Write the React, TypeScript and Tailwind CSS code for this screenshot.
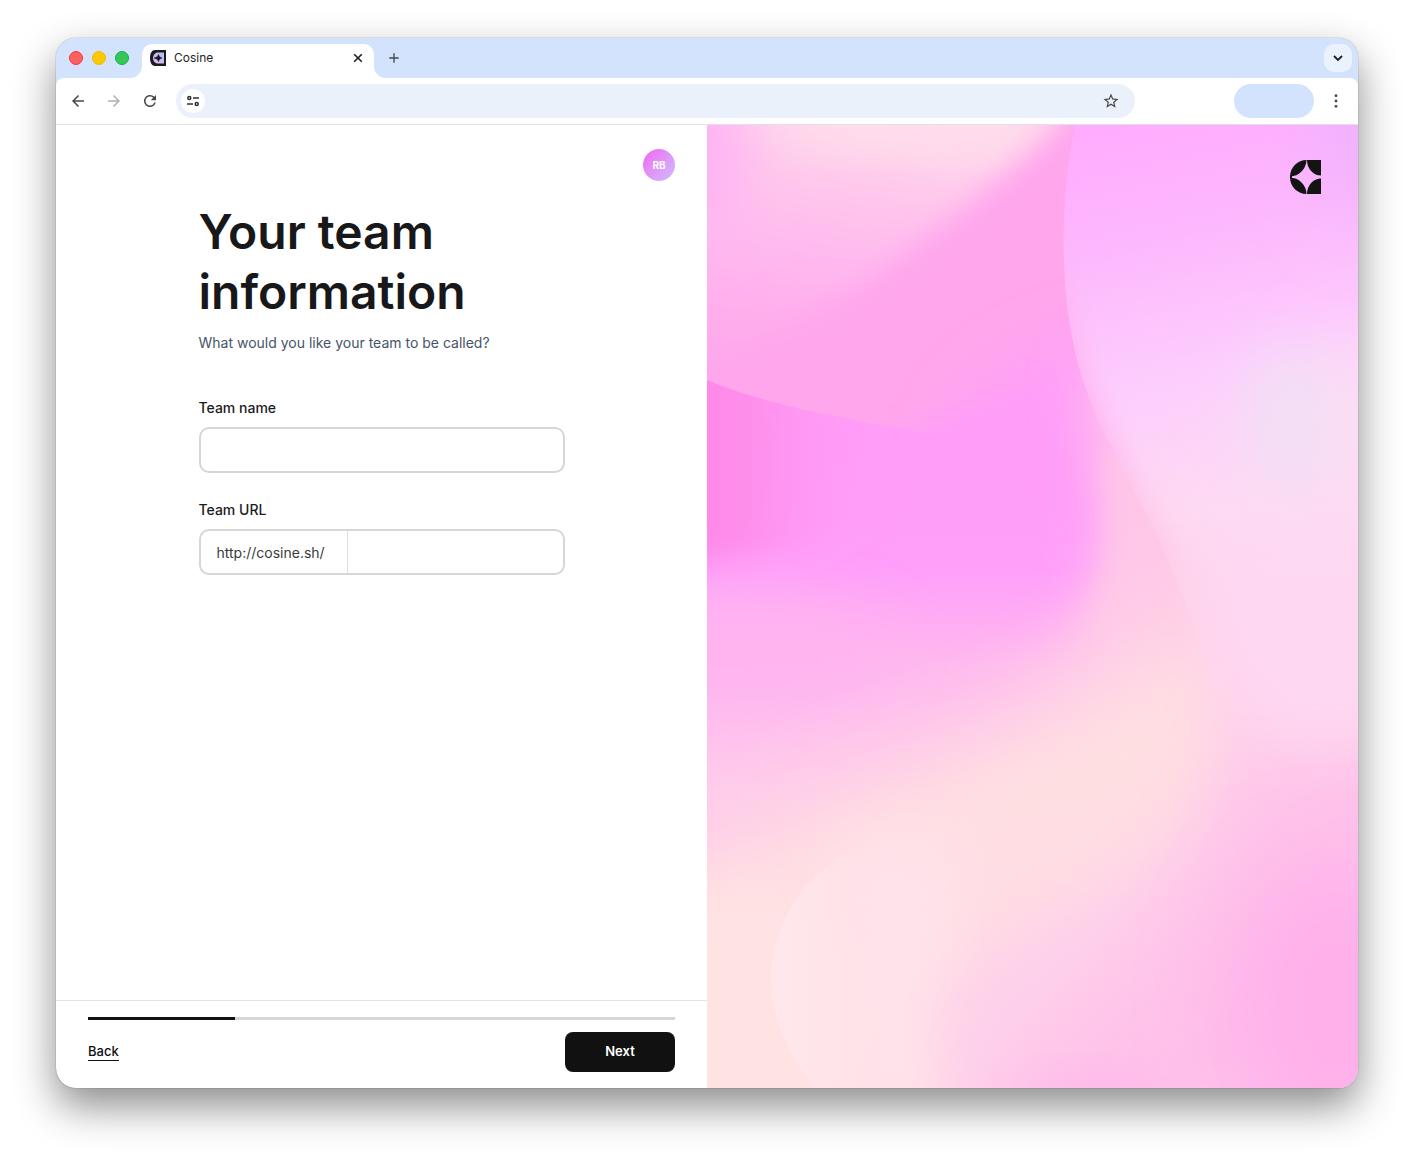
import type { ReactNode } from "react";
import { MdArrowBack, MdArrowForward, MdRefresh, MdStarBorder, MdAdd } from "react-icons/md";

function Favicon() {
  return (
    <svg viewBox="0 0 16 16" className="size-4 shrink-0" aria-hidden="true">
      <defs>
        <linearGradient id="fav" x1="0" y1="1" x2="1" y2="0">
          <stop offset="0" stopColor="#e6b4f4" />
          <stop offset="1" stopColor="#a8c8f5" />
        </linearGradient>
      </defs>
      <path d="M5 0H16V16H5C2 16 0 13 0 8S2 0 5 0Z" fill="#1b1b20" />
      <path d="M8 2.500H14V13.500H8C5 13.500 3 11 3 8S5 2.500 8 2.500Z" fill="url(#fav)" />
      <path d="M8.500 4.500Q9 7.500 12 8Q9 8.500 8.500 11.500Q8 8.500 4 8Q8 7.500 8.500 4.500Z" fill="#18181b" stroke="#18181b" strokeWidth="0.600" />
    </svg>
  );
}

function Logo() {
  return (
    <svg viewBox="0 0 31 34" className="h-[34px] w-[31px]" role="img" aria-label="Cosine" fill="#141414">
      <path d="M16.500 0A16.500 17 0 0 0 0 16.500A17 17 0 0 0 16.500 0Z" />
      <path d="M16.500 34A16.500 17 0 0 1 0 17.500A17 17 0 0 1 16.500 34Z" />
      <path d="M17 0H31V15.500A14 15.500 0 0 1 17 0Z" />
      <path d="M17 34H31V18.500A14 15.500 0 0 0 17 34Z" />
      <path d="M0 15.500H2V18.500H0Z" />
    </svg>
  );
}

function SiteSettingsIcon() {
  return (
    <svg viewBox="0 0 12 12" className="size-3" fill="none" stroke="#303134" strokeWidth="1.500" aria-hidden="true">
      <circle cx="2.300" cy="3" r="1.500" />
      <path d="M6 3H12M0 9H6" />
      <circle cx="9.700" cy="9" r="1.500" />
    </svg>
  );
}

function CloseIcon() {
  return (
    <svg viewBox="0 0 16 16" className="size-4" fill="none" stroke="currentColor" strokeWidth="1.600" aria-hidden="true">
      <path d="M4.200 4.200L11.800 11.800M11.800 4.200L4.200 11.800" />
    </svg>
  );
}

function ChevronIcon() {
  return (
    <svg viewBox="0 0 16 16" className="size-4" fill="none" stroke="currentColor" strokeWidth="1.800" aria-hidden="true">
      <path d="M4 6L8 10L12 6" />
    </svg>
  );
}

function MenuDots() {
  return (
    <svg viewBox="0 0 4 14" className="h-3.5 w-1" fill="currentColor" aria-hidden="true">
      <circle cx="2" cy="1.700" r="1.400" />
      <circle cx="2" cy="7" r="1.400" />
      <circle cx="2" cy="12.300" r="1.400" />
    </svg>
  );
}

function Artwork() {
  return (
    <svg viewBox="0 0 651 963" preserveAspectRatio="none" className="absolute inset-0 size-full" aria-hidden="true">
      <defs>
        <filter id="b12" x="-50%" y="-50%" width="200%" height="200%"><feGaussianBlur stdDeviation="14" /></filter>
        <filter id="b25" x="-50%" y="-50%" width="200%" height="200%"><feGaussianBlur stdDeviation="28" /></filter>
        <filter id="b45" x="-80%" y="-80%" width="260%" height="260%"><feGaussianBlur stdDeviation="45" /></filter>
        <linearGradient id="leftBase" x1="0" y1="0" x2="0" y2="963" gradientUnits="userSpaceOnUse">
          <stop offset="0" stopColor="#ffa8e8" />
          <stop offset="0.200" stopColor="#ffa5ee" />
          <stop offset="0.320" stopColor="#ff9df8" />
          <stop offset="0.460" stopColor="#ff9ffa" />
          <stop offset="0.560" stopColor="#ffb9ee" />
          <stop offset="0.700" stopColor="#ffcaec" />
          <stop offset="1" stopColor="#ffcaec" />
        </linearGradient>
        <linearGradient id="rightBase" x1="420" y1="0" x2="560" y2="640" gradientUnits="userSpaceOnUse">
          <stop offset="0" stopColor="#ffacfe" />
          <stop offset="0.180" stopColor="#fdb8fd" />
          <stop offset="0.400" stopColor="#fdcefd" />
          <stop offset="0.600" stopColor="#fedaf3" />
          <stop offset="1" stopColor="#fed6f2" />
        </linearGradient>
        <linearGradient id="topFold" x1="160" y1="0" x2="120" y2="250" gradientUnits="userSpaceOnUse">
          <stop offset="0" stopColor="#ffd9ec" />
          <stop offset="0.280" stopColor="#ffc6ec" />
          <stop offset="0.500" stopColor="#ffbbef" />
          <stop offset="0.800" stopColor="#ffaeec" />
          <stop offset="1" stopColor="#ffa8ec" />
        </linearGradient>
        <linearGradient id="pinkGlow" x1="0" y1="0" x2="170" y2="0" gradientUnits="userSpaceOnUse">
          <stop offset="0" stopColor="#ff88e8" />
          <stop offset="0.300" stopColor="#ff90ec" />
          <stop offset="1" stopColor="#ff9afc" stopOpacity="0" />
        </linearGradient>
        <linearGradient id="lobe" x1="75" y1="0" x2="200" y2="0" gradientUnits="userSpaceOnUse">
          <stop offset="0" stopColor="#ffe7ec" />
          <stop offset="1" stopColor="#ffe4ea" stopOpacity="0" />
        </linearGradient>
        <clipPath id="foldClip"><path d="M0 0H385V310H220C160 295 70 285 0 255Z" /></clipPath>
        <clipPath id="rightClip"><path d="M368 0C350 90 353 190 378 262C402 330 436 375 454 420C475 470 500 520 512 600L520 740H651V0Z" /></clipPath>
        <linearGradient id="edgeMask" x1="0" y1="380" x2="0" y2="620" gradientUnits="userSpaceOnUse">
          <stop offset="0" stopColor="#fff" />
          <stop offset="1" stopColor="#000" />
        </linearGradient>
        <mask id="rightMask"><rect width="651" height="963" fill="url(#edgeMask)" /></mask>
      </defs>
      <rect width="651" height="963" fill="url(#leftBase)" />
      <path d="M-80 200H200V380L100 420L-80 450Z" fill="url(#pinkGlow)" filter="url(#b12)" />
      <ellipse cx="20" cy="525" rx="160" ry="50" fill="#ffb4f0" filter="url(#b25)" />

      <g clipPath="url(#foldClip)">
        <rect width="420" height="320" fill="#ffa6ed" />
        <path d="M-80 -80H400L345 5C300 45 270 75 220 110C170 150 110 200 -80 270Z" fill="url(#topFold)" filter="url(#b12)" />
        <ellipse cx="200" cy="-15" rx="110" ry="30" fill="#ffe0ea" filter="url(#b25)" />
        <ellipse cx="-15" cy="20" rx="55" ry="90" fill="#ffb2f4" filter="url(#b25)" />
        <path d="M240 345C250 270 310 230 420 205V345Z" fill="#ff9ef9" filter="url(#b25)" />
        <path d="M150 365C170 310 240 275 420 270V365Z" fill="#ff9df9" filter="url(#b12)" />
      </g>

      <path d="M-80 700C60 650 210 615 300 565C370 530 400 480 405 400C404 350 385 300 380 250L700 200V1040H-80Z" fill="#ffcbe9" filter="url(#b25)" />
      <path d="M395 330C408 400 405 460 380 510L480 540V330Z" fill="#ffc6e8" filter="url(#b12)" />
      <path d="M-120 760C80 700 280 645 370 590C440 545 450 500 455 440L530 560V1080H-120Z" fill="#ffdde3" filter="url(#b45)" />
      <path d="M60 745C200 680 350 620 430 590C500 540 510 600 480 640C400 690 150 740 60 790Z" fill="#ffdfe1" filter="url(#b25)" />
      <ellipse cx="30" cy="890" rx="130" ry="130" fill="#ffe3e3" filter="url(#b25)" />
      <path d="M135 730C60 780 50 860 80 920Q95 950 115 970H220V730Z" fill="url(#lobe)" />
      <path d="M130 710H250V1000H150Z" fill="#ffe3ea" filter="url(#b25)" />

      <path d="M520 600C520 700 480 720 420 750C340 790 270 810 230 880L240 1040H740V540Z" fill="#fed1ea" filter="url(#b25)" />
      <path d="M560 640C510 700 500 760 430 830C400 870 350 910 300 960V1040H740V600Z" fill="#ffbcea" opacity="0.800" filter="url(#b45)" />
      <ellipse cx="630" cy="880" rx="100" ry="140" fill="#ffafea" filter="url(#b45)" />
      <ellipse cx="385" cy="985" rx="75" ry="28" fill="#ffb6ec" filter="url(#b25)" />
      <path d="M520 400L515 540C550 630 590 630 720 600V350Z" fill="#fed8f2" filter="url(#b25)" />

      <g clipPath="url(#rightClip)" mask="url(#rightMask)">
        <rect x="340" width="320" height="760" fill="url(#rightBase)" />
        <path d="M350 100C350 220 420 350 460 430L440 500L320 280Z" fill="#ffb2ee" filter="url(#b12)" />
        <path d="M390 330L480 440V640H430Z" fill="#ffd4e4" filter="url(#b25)" />
      </g>
      <ellipse cx="675" cy="0" rx="50" ry="80" fill="#e8b2ff" filter="url(#b45)" />
      <ellipse cx="590" cy="295" rx="55" ry="75" fill="#f3dff5" filter="url(#b25)" />
      <ellipse cx="655" cy="290" rx="25" ry="80" fill="#fcdff3" filter="url(#b25)" />
    </svg>
  );
}

function ToolButton({ label, children }: { label: string; children: ReactNode }) {
  return (
    <button type="button" aria-label={label} className="flex size-7 shrink-0 items-center justify-center rounded-full text-[#474747]">
      {children}
    </button>
  );
}

function TabStrip() {
  return (
    <div className="flex h-10 items-end bg-[#d3e3fd] pr-1.5">
      <div className="flex h-10 items-center gap-[9px] pl-[13px]">
        <span className="size-3.5 rounded-full border border-[#f9333d] bg-[#fe5f5f]" />
        <span className="size-3.5 rounded-full border border-[#f0b90a] bg-[#fcc800]" />
        <span className="size-3.5 rounded-full border border-[#0cb43a] bg-[#35c759]" />
      </div>
      <span className="ml-px size-3 overflow-hidden bg-white">
        <span className="block size-3 rounded-br-[12px] bg-[#d3e3fd]" />
      </span>
      <div className="flex h-[34px] w-[232px] items-center gap-2 rounded-t-[10px] bg-white pr-2 pb-1.5 pl-2">
        <Favicon />
        <span className="flex-1 font-[Inter,sans-serif] text-xs text-[#1f1f1f]">Cosine</span>
        <button type="button" aria-label="Close tab" className="text-[#1f1f1f]">
          <CloseIcon />
        </button>
      </div>
      <span className="size-3 overflow-hidden bg-white">
        <span className="block size-3 rounded-bl-[12px] bg-[#d3e3fd]" />
      </span>
      <button type="button" aria-label="New tab" className="flex h-10 items-center text-[#474747]">
        <MdAdd className="size-4" />
      </button>
      <button type="button" aria-label="Search tabs" className="mb-1.5 ml-auto flex size-7 items-center justify-center rounded-[10px] bg-[#eaf2fe] text-[#1f1f1f]">
        <ChevronIcon />
      </button>
    </div>
  );
}

function Toolbar() {
  return (
    <div className="bg-[#d3e3fd]">
      <div className="flex h-[47px] items-center rounded-t-[8px] border-b border-[#dfe1e5] bg-white pr-2 pl-2">
        <div className="flex gap-2">
          <ToolButton label="Go back"><MdArrowBack className="size-[18px]" /></ToolButton>
          <span className="flex text-[#b0b0b0]">
            <button type="button" disabled aria-label="Go forward" className="flex size-7 items-center justify-center">
              <MdArrowForward className="size-[18px]" />
            </button>
          </span>
          <ToolButton label="Reload"><MdRefresh className="size-[18px]" /></ToolButton>
        </div>
        <div className="ml-3 flex h-[34px] flex-1 items-center rounded-full bg-[#eaf1fa] pr-2.5 pl-[5px]">
          <button type="button" aria-label="Site information" className="flex size-6 items-center justify-center rounded-full bg-white">
            <SiteSettingsIcon />
          </button>
          <input aria-label="Address" className="min-w-0 flex-1 bg-transparent px-2 font-[Inter,sans-serif] text-sm outline-none" />
          <ToolButton label="Bookmark this page"><MdStarBorder className="size-[18px]" /></ToolButton>
        </div>
        <span className="ml-[99px] h-[34px] w-20 rounded-full bg-[#d3e3fd]" />
        <div className="ml-2 flex"><ToolButton label="Menu"><MenuDots /></ToolButton></div>
      </div>
    </div>
  );
}

function TeamForm() {
  return (
    <form id="team" className="mx-auto mt-[21px] w-full max-w-[366px]">
      <h1 className="text-5xl leading-[60px] font-semibold text-[#18181b]">Your team information</h1>
      <p className="mt-[11px] text-sm text-[#475467]">What would you like your team to be called?</p>
      <label htmlFor="team-name" className="mt-[45px] block text-sm font-medium text-[#1c1c1e]">Team name</label>
      <input id="team-name" className="mt-[9px] h-[46px] w-full rounded-[10px] border-2 border-[#d6d6d6] px-4 text-sm outline-none" />
      <label htmlFor="team-url" className="mt-[27px] block text-sm font-medium text-[#1c1c1e]">Team URL</label>
      <div className="mt-[9px] flex h-[46px] items-center overflow-hidden rounded-[10px] border-2 border-[#d6d6d6] text-sm text-[#3a3a3c]">
        <span className="flex h-full w-[147px] shrink-0 items-center border-r border-[#e0e0e0] pt-0.5 pl-4">http://cosine.sh/</span>
        <input id="team-url" className="h-full min-w-0 flex-1 px-4 outline-none" />
      </div>
    </form>
  );
}

export default function App() {
  return (
    <div className="flex min-h-screen flex-col bg-white px-14 pt-[38px] pb-[74px]">
      <div className="flex flex-1 flex-col overflow-hidden rounded-[20px] bg-white shadow-[0_0_1px_0_rgba(0,0,0,0.7),0_18px_42px_rgba(0,0,0,0.46)]">
        <TabStrip />
        <Toolbar />
        <div className="grid flex-1 grid-cols-2 font-[Inter,sans-serif]">
          <main className="flex flex-col">
            <div className="flex flex-1 flex-col px-8 pt-6">
              <button type="button" className="size-8 self-end rounded-full bg-linear-to-br from-[#f062f0] to-[#c9bdff] text-[10px] font-bold text-white">RB</button>
              <TeamForm />
            </div>
            <footer className="border-t border-[#e4e4e7] px-8 py-4">
              <div role="progressbar" aria-label="Setup progress" aria-valuenow={25} aria-valuemin={0} aria-valuemax={100} className="h-[3px] bg-[#d6d6d6]">
                <div className="h-full w-1/4 bg-[#111111]" />
              </div>
              <div className="mt-3 flex items-center justify-between">
                <a href="#back" className="border-b border-[#111111] pb-px text-[13px] leading-4 font-medium text-[#111111]">Back</a>
                <button type="submit" form="team" className="h-10 w-[110px] rounded-lg bg-[#111111] text-[13px] font-semibold text-white">Next</button>
              </div>
            </footer>
          </main>
          <aside className="relative flex items-start justify-end overflow-hidden">
            <Artwork />
            <div className="relative pt-[35px] pr-[37px]"><Logo /></div>
          </aside>
        </div>
      </div>
    </div>
  );
}
